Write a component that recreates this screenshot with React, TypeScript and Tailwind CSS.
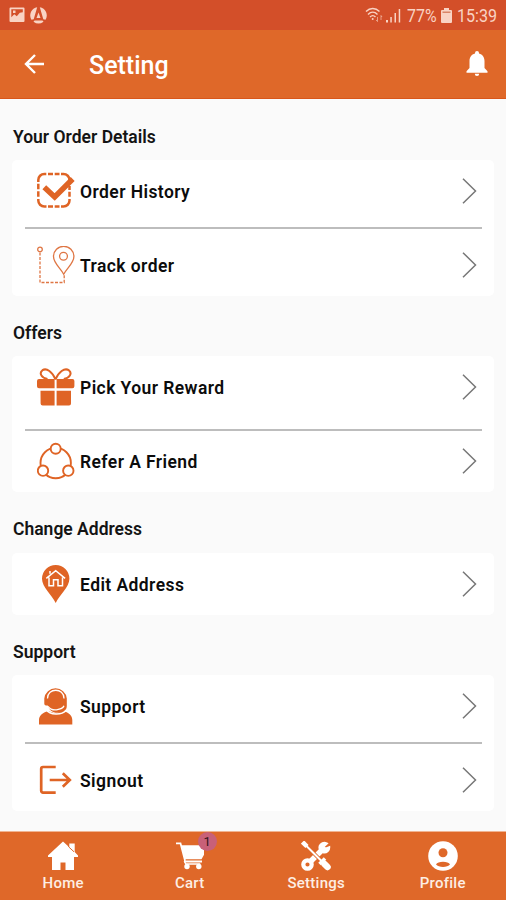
import React from 'react';

interface RowProps {
  label: string;
  icon: React.ReactNode;
}

interface SectionProps {
  title: string;
  rows: RowProps[];
  titleClass?: string;
  dividerClass?: string;
}

const OrderHistoryIcon = () => (
  <svg viewBox="0 0 38 38" className="size-[38px]" fill="none" stroke="#df6425">
    <path d="M1.3 10V8a6 6 0 0 1 6-6h2M24 2h2.500a6 6 0 0 1 6 6M32.500 27v1.500a6 6 0 0 1-6 6H24M9.500 34.500H7.300a6 6 0 0 1-6-6V27" strokeWidth="2.500" />
    <path d="M11 2h5M17.700 2h4.800M11 34.500h5M17.700 34.500h4.800M1.300 11.800v5.500M1.300 19.200v5.500M32.500 14v4M32.500 19.800v5" strokeWidth="2.500" />
    <path d="M7.300 15.300l10.400 9.700L35.700 7" strokeWidth="5.500" />
  </svg>
);

const TrackIcon = () => (
  <svg viewBox="0 0 38 38" className="size-[38px]" fill="none" stroke="#df7644" strokeWidth="1.3">
    <circle cx="3" cy="3.400" r="2.300" />
    <path d="M3 6.500v30h24.200V29" strokeDasharray="3 1.500" />
    <path d="M26.700 28.200C23 21.500 16.500 17 16.500 10.500a10.200 10.200 0 0 1 20.400 0c0 6.500-6.500 11-10.200 17.700z" />
    <circle cx="26.500" cy="10.200" r="3.900" />
  </svg>
);

const GiftIcon = () => (
  <svg viewBox="0 0 38 38" className="size-[38px]" fill="#df6425">
    <path
      d="M18.500 11.500C15.500 4 9.500-.5 5.500 2.200c-4 3.300-.5 7.800 5 8.800M18.500 11.500C21.500 4 27.500-.5 31.800 2.200c4 3.300.5 7.800-5 8.800"
      fill="none"
      stroke="#df6425"
      strokeWidth="2"
    />
    <path d="M2 11h15.600v9.300H2a2 2 0 0 1-2-2V13a2 2 0 0 1 2-2zM19.600 11h15.800a2 2 0 0 1 2 2v5.300a2 2 0 0 1-2 2H19.600z" />
    <path d="M3.500 22.800h14.100v14.700h-12a2 2 0 0 1-2-2zM19.600 22.800H34v12.700a2 2 0 0 1-2 2H19.600z" />
  </svg>
);

const ReferIcon = () => (
  <svg viewBox="0 0 38 38" className="size-[38px]" fill="#fff" stroke="#df6425" strokeWidth="1.900">
    <circle cx="18.700" cy="21" r="15.200" />
    <circle cx="18.700" cy="6.700" r="5" />
    <circle cx="6" cy="28.700" r="5.200" />
    <circle cx="31.300" cy="28.700" r="5.200" />
  </svg>
);

const AddressIcon = () => (
  <svg viewBox="0 0 38 38" className="size-[38px]" fill="none" stroke="#fff" strokeWidth="1.500">
    <path
      d="M18.700 38C15 30 5 22 5 13.700a13.700 13.700 0 0 1 27.400 0C32.400 22 22.400 30 18.700 38z"
      fill="#df6425"
      stroke="none"
    />
    <path d="M9.300 13.300L18.700 5.700l9.400 7.600M12 12.500v8.300h4.500v-6h4.500v6h4.500v-8.300M13 8.700V6" />
  </svg>
);

const SupportIcon = () => (
  <svg viewBox="0 0 38 38" className="size-[38px]" fill="#df6425">
    <path d="M2 37.500v-4.500c0-4.500 3.500-7 9-9l7.500 2.500 8-2.500c5.500 2 8.800 4.500 8.800 9v4.500z" />
    <path d="M7.300 11.500a11.300 11.300 0 0 1 22.500 0v7.500c0 4.500-3.500 6.800-9.500 6.800-5 0-8.500-3.300-9.500-7.300H9a1.700 1.700 0 0 1-1.700-1.700z" />
    <path
      d="M10.500 11.500c0-11 16.500-11 16.500 0M11 19.500c2.500 3 5 3.800 8.500 3.300 3.500-.4 6.500-1.300 7.500-4"
      fill="none"
      stroke="#fff"
      strokeWidth="1.300"
    />
    <path d="M9 22.500c4 5.500 15 6.500 20.500.5" fill="none" stroke="#fff" strokeWidth="1.500" />
  </svg>
);

const SignoutIcon = () => (
  <svg viewBox="0 0 38 38" className="size-[38px]" fill="none" stroke="#df6425" strokeWidth="2.700">
    <path d="M18.700 6H6a1.800 1.800 0 0 0-1.800 1.800v22A1.800 1.800 0 0 0 6 31.600h12.700M12.700 19H33M25.800 12.300l7 6.700-7 6.700" />
  </svg>
);

const SECTIONS: SectionProps[] = [
  {
    title: 'Your Order Details',
    rows: [
      { label: 'Order History', icon: <OrderHistoryIcon /> },
      { label: 'Track order', icon: <TrackIcon /> },
    ],
  },
  {
    title: 'Offers',
    dividerClass: 'pt-3',
    rows: [
      { label: 'Pick Your Reward', icon: <GiftIcon /> },
      { label: 'Refer A Friend', icon: <ReferIcon /> },
    ],
  },
  {
    title: 'Change Address',
    titleClass: 'h-[61px] pb-px',
    rows: [{ label: 'Edit Address', icon: <AddressIcon /> }],
  },
  {
    title: 'Support',
    rows: [
      { label: 'Support', icon: <SupportIcon /> },
      { label: 'Signout', icon: <SignoutIcon /> },
    ],
  },
];

const StatusBar = () => (
  <div className="flex h-[30px] items-center bg-[#d34f29] pl-[9px] pr-[10px] text-[#f9d3c4]">
    <svg viewBox="0 0 16 16" className="size-4" fill="currentColor">
      <path
        fillRule="evenodd"
        d="M1.500.5h13a1 1 0 0 1 1 1v12.500a1 1 0 0 1-1 1h-13a1 1 0 0 1-1-1V1.500a1 1 0 0 1 1-1zM2.300 2.300v8l3-3 2.500 2 3-3.500 3-.5v-3zM4 3.500h2.500V6H4z"
      />
    </svg>
    <svg viewBox="0 0 17 17" className="ml-[5px] size-[17px]" fill="currentColor">
      <path d="M7.200.3a8.200 8.200 0 0 0-5.700 12.500l2.200-.6zM9.800.3a8.200 8.200 0 0 1 5.700 12.500l-2.200-.6zM8.500 5.500l2 5.500h-4zM4.500 13.500h8l1 1.200a8.200 8.200 0 0 1-10 0z" />
    </svg>
    <div className="ml-auto flex items-center">
      <svg viewBox="0 0 18 16" className="h-4 w-[18px]" fill="none" stroke="currentColor" strokeWidth="1.400">
        <path d="M1 4.500c4-4 9.500-4 13.500 0M3 7.500c3-3 6.500-3 9.500 0M5 10c2-2 3.500-2 5.500 0" />
        <circle cx="7.700" cy="12" r="1" fill="currentColor" stroke="none" />
        <path d="M12.500 10v4.500M11 13l1.500 1.500M16 13V8.500M16 8.500l1 1.500" strokeWidth="1" opacity=".6" />
      </svg>
      <svg viewBox="0 0 15 15" className="ml-[3px] h-[15px] w-[15px]" fill="currentColor">
        <path d="M0 12h2v2.500H0zM4.300 9h1.500v5.500H4.300zM8.500 5H10v9.500H8.500zM12.700 1h1.500v13.500h-1.500z" />
      </svg>
      <span className="ml-[6px] w-[30px] origin-left scale-x-[0.86] pt-[3px] text-[18.500px]">77%</span>
      <svg viewBox="0 0 11 15" className="ml-[4px] h-[15px] w-[11px]" fill="currentColor">
        <path d="M3 0h5v2h2a1 1 0 0 1 1 1v11a1 1 0 0 1-1 1H1a1 1 0 0 1-1-1V3a1 1 0 0 1 1-1h2z" />
        <path d="M1.500 3.500h8V5h-8z" fill="#d98467" />
      </svg>
      <span className="ml-[5px] w-[39px] origin-left scale-x-[0.87] pt-[3px] text-[18.500px]">15:39</span>
    </div>
  </div>
);

const Header = () => (
  <header className="flex h-[69px] items-center border-b border-[#d9561a] bg-[#df6829] pl-[24px] pr-[18px] text-white">
    <svg viewBox="0 0 20 20" className="size-5" fill="none" stroke="#fff" strokeWidth="2.400">
      <path d="M20 10H2M11 1L2 10l9 9" />
    </svg>
    <h1 className="ml-[45px] pt-[3px] text-[25px] font-medium leading-none">Setting</h1>
    <svg viewBox="0 0 22 26" className="ml-auto h-[26px] w-[22px]" fill="#fff">
      <path d="M11 0a2 2 0 0 1 2 2v.6c3.600.9 5.500 3.900 5.500 7.400v7l3 3.200v1.500H.5v-1.500l3-3.200v-7c0-3.500 1.900-6.500 5.500-7.400V2a2 2 0 0 1 2-2zM8.800 22.700h4.400a2.200 2.200 0 0 1-4.400 0z" />
    </svg>
  </header>
);

const Row: React.FC<RowProps> = ({ label, icon }) => (
  <button className="flex h-[62px] w-full items-center pl-[25px] pr-[17px] text-left">
    {icon}
    <span className="ml-[5px] pt-[2px] text-[17.500px] font-semibold tracking-[0.420px] text-[#0c0c0c]">{label}</span>
    <svg viewBox="0 0 15 26" className="ml-auto h-[26px] w-[15px]" fill="none" stroke="#777" strokeWidth="1.500">
      <path d="M1 .7L13.500 13 1 25.300" />
    </svg>
  </button>
);

const Section: React.FC<SectionProps> = ({ title, rows, titleClass = 'h-[60px]', dividerClass = '' }) => (
  <section>
    <h2 className={`flex items-center pl-px pt-[15px] text-[17.500px] font-semibold text-[#141414] ${titleClass}`}>
      {title}
    </h2>
    <div className="rounded-[5px] bg-white">
      {rows.map((row, i) => (
        <React.Fragment key={row.label}>
          {i > 0 && (
            <div className={`flex h-3 items-center pl-[13px] pr-3 ${dividerClass}`}>
              <div className="h-[2px] w-full shrink-0 bg-[#bdbdbd]" />
            </div>
          )}
          <Row {...row} />
        </React.Fragment>
      ))}
    </div>
  </section>
);

const NAV_ITEMS = [
  {
    label: 'Home',
    icon: (
      <svg viewBox="0 0 30 30" className="size-[30px]" fill="#fff">
        <path d="M15 .5l6 5.500V2.500h5.700v8.500l3.300 3.600V16h-4v13h-8.500v-7.500h-5V29H4V16H0v-1.400z" />
        <path d="M20.800 2v4l5.200 4.800" fill="none" stroke="#df6829" strokeWidth="1" />
      </svg>
    ),
  },
  {
    label: 'Cart',
    badge: 1,
    icon: (
      <svg viewBox="0 0 30 30" className="size-[30px]" fill="#fff">
        <path d="M1 2.300h4.500L10 19.500M9 20.500h18" fill="none" stroke="#fff" strokeWidth="1.800" />
        <path d="M6.500 4.300H29v9.500l-2.500 4.500H9.500z" />
        <path d="M9.300 20l1.500 3h14.500" fill="none" stroke="#fff" strokeWidth="1.500" />
        <circle cx="12" cy="25.500" r="2.700" />
        <circle cx="23.800" cy="25.500" r="2.700" />
      </svg>
    ),
  },
  {
    label: 'Settings',
    icon: (
      <svg viewBox="0 0 30 30" className="size-[30px]" fill="none" stroke="#fff">
        <path d="M8.500 21.500L21.500 8.500" strokeWidth="5.500" />
        <path d="M25.500 2.500A4.700 4.700 0 1 0 28 6.500l-3.500 1.300-2.200-2.200z" fill="#fff" strokeWidth="2.500" />
        <circle cx="6.500" cy="23.500" r="4.200" strokeWidth="4.200" />
        <path d="M5 4.500L20 19.500" stroke="#df6829" strokeWidth="3.800" />
        <path d="M1.500 1l4.500 4.500" strokeWidth="4.500" />
        <path d="M5 4.500L21 20.500" strokeWidth="2" />
        <path d="M18.500 23l5.500-5.500" strokeWidth="3.500" />
        <path d="M23.500 23l3 3" strokeWidth="6.500" strokeLinecap="round" />
      </svg>
    ),
  },
  {
    label: 'Profile',
    icon: (
      <svg viewBox="0 0 30 30" className="size-[30px]" fill="#df6829">
        <circle cx="15" cy="15" r="14.800" fill="#fff" />
        <circle cx="15" cy="11.700" r="4.500" />
        <path d="M8 23.500c1.500-3.700 12.500-3.700 14 0-2.500 3.300-11.500 3.300-14 0z" />
      </svg>
    ),
  },
];

const BottomNav = () => (
  <nav className="grid h-[69px] grid-cols-4 border-t border-[#f0b492] bg-[#df6829]">
    {NAV_ITEMS.map((item) => (
      <button key={item.label} className="flex flex-col items-center justify-start pt-[9px] text-[#fdeee4]">
        <span className="relative h-[30px]">
          {item.icon}
          {item.badge && (
            <span className="absolute -right-[12px] -top-[9px] flex size-[19px] items-center justify-center rounded-full bg-[#c86078] text-[13px] text-[#35141c]">
              {item.badge}
            </span>
          )}
        </span>
        <span className="mt-[3px] text-[15px] font-medium leading-[18px] tracking-[0.250px]">{item.label}</span>
      </button>
    ))}
  </nav>
);

const App = () => (
  <div className="flex h-[900px] w-[506px] flex-col overflow-hidden bg-[#fafafa] font-[Roboto,sans-serif]">
    <StatusBar />
    <Header />
    <main className="flex-1 px-3 pt-px">
      {SECTIONS.map((section) => (
        <Section key={section.title} {...section} />
      ))}
    </main>
    <BottomNav />
  </div>
);

export default App;
